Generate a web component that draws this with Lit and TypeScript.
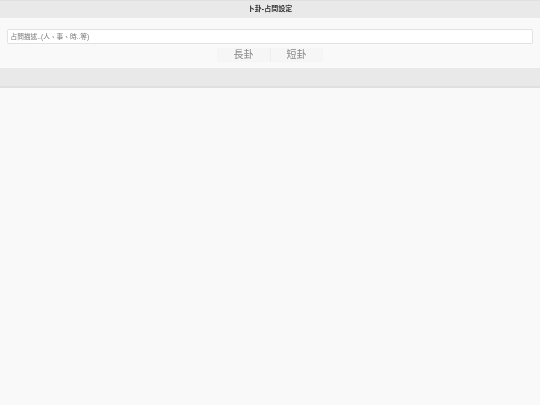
import { LitElement, html, css } from "lit";
import { customElement } from "lit/decorators.js";

@customElement("app-root")
export class AppRoot extends LitElement {
  static styles = css`
    :host {
      display: block;
      width: 540px;
      height: 405px;
      background: #f9f9f9;
      font-family: "Liberation Sans", "Noto Sans CJK TC", sans-serif;
      overflow: hidden;
    }
    .header {
      height: 18px;
      box-sizing: border-box;
      padding-bottom: 4px;
      background: #e9e9e9;
      border-top: 1px solid #e0e0e0;
      display: flex;
      align-items: center;
      justify-content: center;
      font-size: 7px;
      font-weight: 700;
      color: #333;
    }
    .blur {
      filter: blur(0.3px);
    }
    .content {
      height: 50px;
      padding: 11px 7px 0;
      box-sizing: border-box;
      display: flex;
      flex-direction: column;
      align-items: center;
    }
    .search {
      width: 100%;
      height: 15px;
      box-sizing: border-box;
      background: #fff;
      border: 1px solid #e2e2e2;
      border-radius: 2px;
      padding: 0 2.5px 1px;
      display: flex;
      align-items: center;
      font-size: 6.7px;
      color: #777;
    }
    .tabs {
      display: flex;
      margin-top: 4px;
    }
    .tab {
      width: 53px;
      height: 14px;
      box-sizing: border-box;
      padding: 0 0 3px 0;
      display: flex;
      align-items: center;
      justify-content: center;
      background: #f6f6f6;
      border: 1px solid #f5f5f5;
      font-size: 10px;
      color: #888;
    }
    .tab + .tab {
      border-left: 1px solid #eeeeee;
    }
    .footer {
      height: 20px;
      box-sizing: border-box;
      background: #e9e9e9;
      border-bottom: 2px solid #e0e0e0;
    }
  `;

  render() {
    return html`
      <div class="header"><span class="blur">卜卦-占問設定</span></div>
      <div class="content">
        <div class="search"><span class="blur">占問描述..(人、事、時..等)</span></div>
        <div class="tabs">
          <div class="tab"><span class="blur">長卦</span></div>
          <div class="tab"><span class="blur">短卦</span></div>
        </div>
      </div>
      <div class="footer"></div>
    `;
  }
}
